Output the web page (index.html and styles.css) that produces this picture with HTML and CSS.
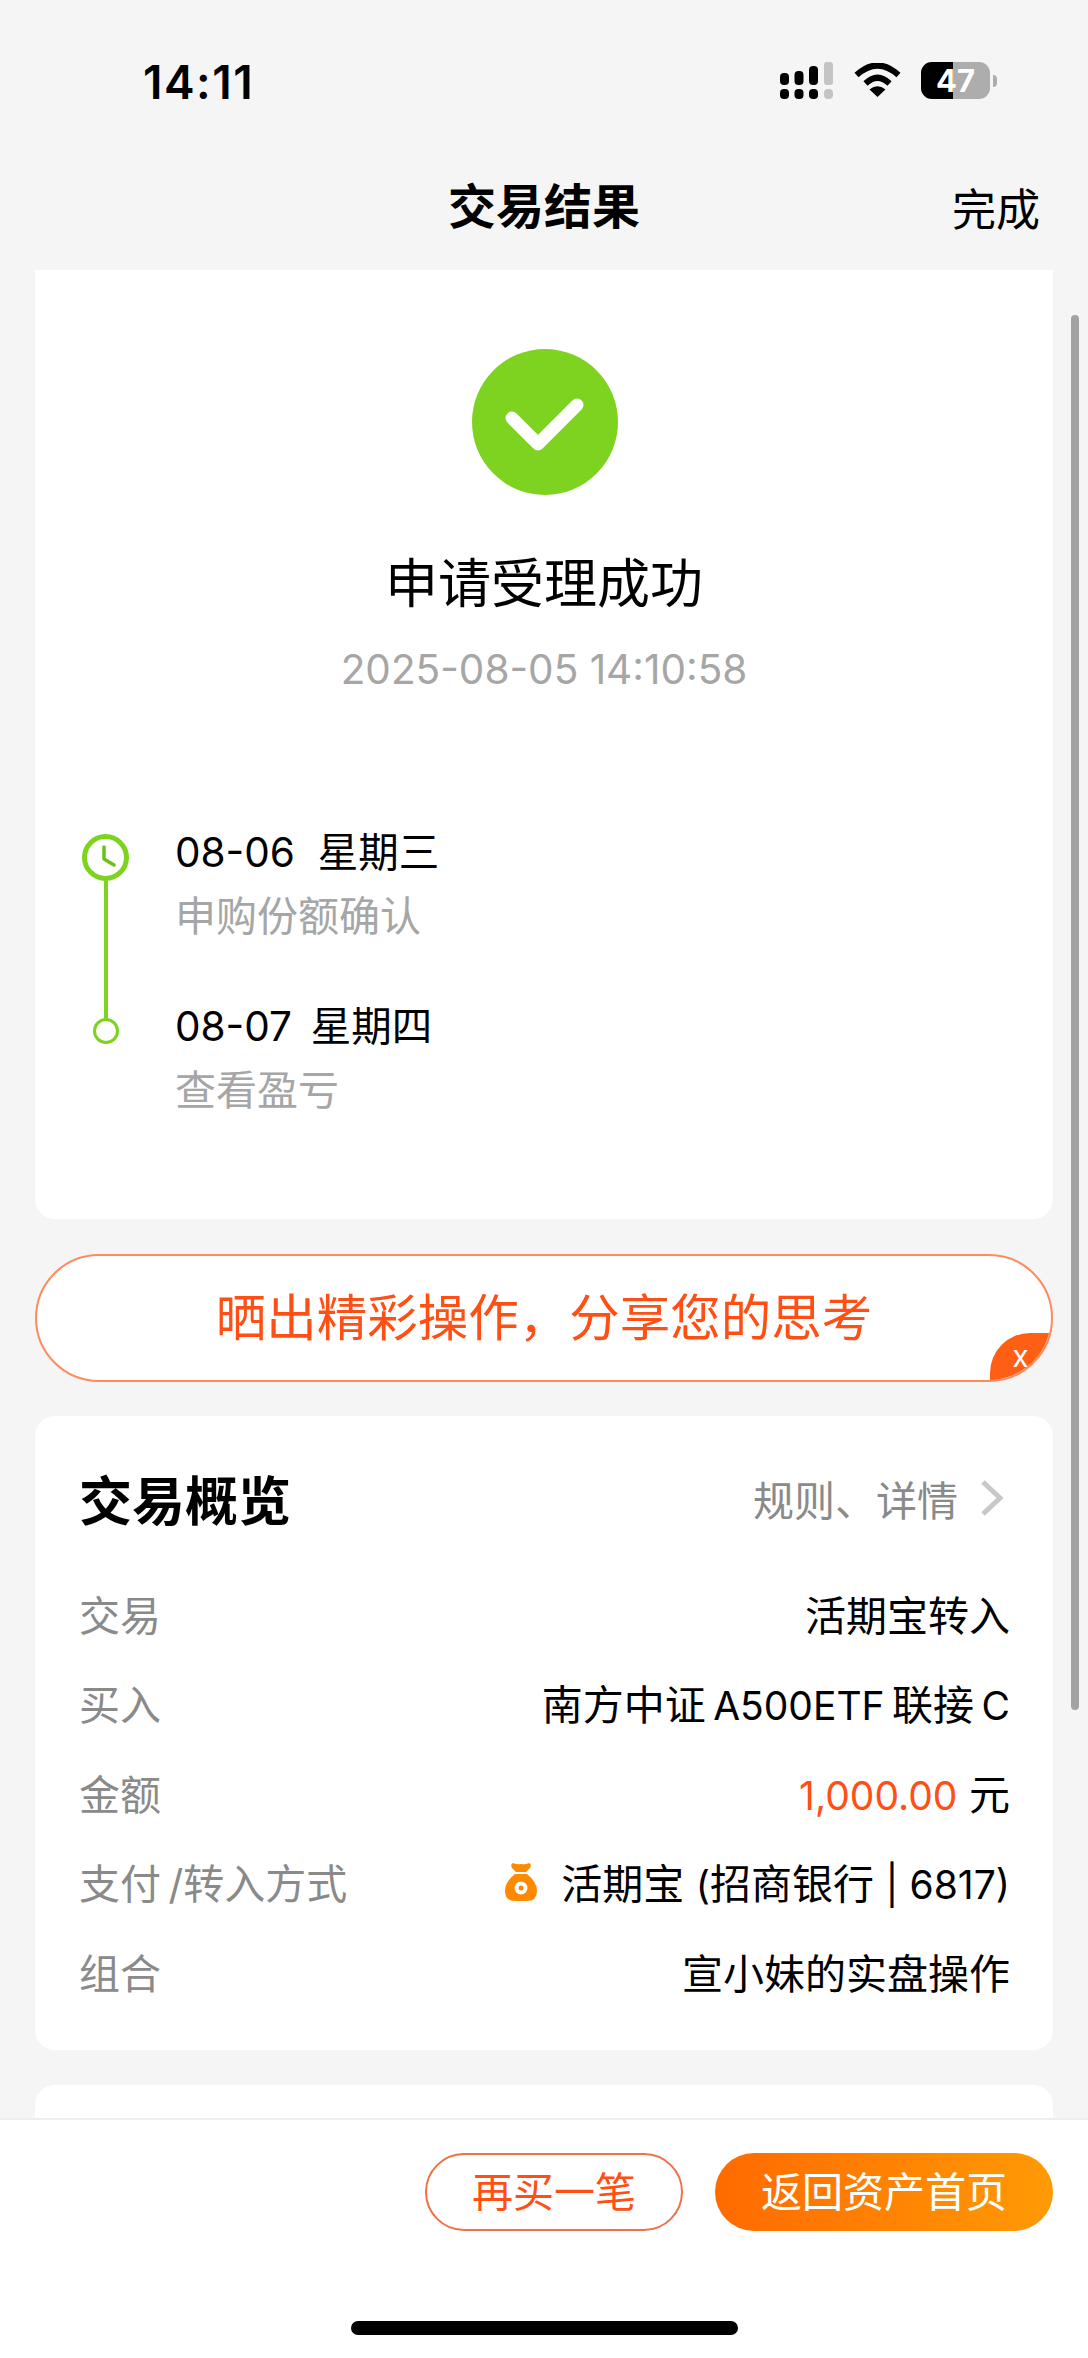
FILE: index.html
```html
<!DOCTYPE html>
<html lang="zh-CN">
<head>
  <meta charset="UTF-8">
  <meta name="viewport" content="width=device-width, initial-scale=1.0">
  <title>交易结果</title>
  <link rel="stylesheet" href="styles.css">
</head>
<body>
  <div class="app-container">
    <!-- Status Bar -->
    <div class="status-bar">
      <div class="status-time">14:11</div>
      <div class="status-icons">
        <svg class="icon-signal" width="53" height="37" viewBox="0 0 53 37">
          <rect x="0" y="11" width="9" height="12" rx="4" fill="#000"/>
          <rect x="14.500" y="9" width="9" height="14" rx="4" fill="#000"/>
          <rect x="29" y="4" width="9" height="19" rx="4" fill="#000"/>
          <rect x="44" y="0" width="9" height="23" rx="3" fill="#c4c4c4"/>
          <rect x="0" y="27" width="9" height="10" rx="4" fill="#000"/>
          <rect x="14.500" y="27" width="9" height="10" rx="4" fill="#000"/>
          <rect x="29" y="27" width="9" height="10" rx="4" fill="#000"/>
          <rect x="44" y="27" width="9" height="10" rx="4" fill="#c4c4c4"/>
        </svg>
        <svg class="icon-wifi" width="47" height="34" viewBox="0 0 47 34">
          <path d="M2.500 12 Q23.500 -7 44.500 12" fill="none" stroke="#000" stroke-width="6"/>
          <path d="M11.500 20.500 Q23.500 9 35.500 20.500" fill="none" stroke="#000" stroke-width="6"/>
          <path d="M15.500 26.500 Q23.500 20 31.500 26.500 L23.500 34 Z" fill="#000"/>
        </svg>
        <div class="battery">
          <div class="battery-body">
            <div class="battery-fill"></div>
            <div class="battery-text">47</div>
          </div>
          <div class="battery-cap"></div>
        </div>
      </div>
    </div>

    <!-- Nav -->
    <div class="nav-bar">
      <div class="nav-title">交易结果</div>
      <div class="nav-action">完成</div>
    </div>

    <!-- Content -->
    <div class="content">
      <div class="card result-card">
        <svg class="result-icon" width="146" height="146" viewBox="0 0 146 146">
          <circle cx="73" cy="73" r="73" fill="#7ed321"/>
          <path d="M40 69 L66 95 L105 56" fill="none" stroke="#fff" stroke-width="13" stroke-linecap="round" stroke-linejoin="round"/>
        </svg>
        <div class="result-title">申请受理成功</div>
        <div class="result-time">2025-08-05 14:10:58</div>

        <div class="timeline">
          <div class="timeline-rail">
            <svg width="47" height="47" viewBox="0 0 47 47">
              <circle cx="23.500" cy="23.500" r="21" fill="#fff" stroke="#7ed321" stroke-width="5"/>
              <path d="M22 13 V25 L32 31" fill="none" stroke="#6cbf1c" stroke-width="3.500" stroke-linecap="round" stroke-linejoin="round"/>
            </svg>
            <div class="rail-line"></div>
            <div class="rail-dot"></div>
          </div>
          <div class="timeline-list">
            <div class="timeline-item">
              <div class="timeline-date">08-06&nbsp; 星期三</div>
              <div class="timeline-desc">申购份额确认</div>
            </div>
            <div class="timeline-item">
              <div class="timeline-date">08-07&nbsp; 星期四</div>
              <div class="timeline-desc">查看盈亏</div>
            </div>
          </div>
        </div>
      </div>

      <div class="share-banner">
        晒出精彩操作，分享您的思考
        <div class="share-close">x</div>
      </div>

      <div class="card overview-card">
        <div class="overview-header">
          <div class="overview-title">交易概览</div>
          <div class="overview-link">
            规则、详情
            <svg width="24" height="38" viewBox="0 0 24 38">
              <path d="M3 3 L20 19 L3 35" fill="none" stroke="#c8c8c8" stroke-width="5"/>
            </svg>
          </div>
        </div>
        <div class="overview-row">
          <div class="row-label">交易</div>
          <div class="row-value">活期宝转入</div>
        </div>
        <div class="overview-row">
          <div class="row-label">买入</div>
          <div class="row-value">南方中证&#8201;<span class="latin">A500ETF</span>&#8201;联接&#8201;<span class="latin">C</span></div>
        </div>
        <div class="overview-row">
          <div class="row-label">金额</div>
          <div class="row-value"><span class="latin amount">1,000.00</span> 元</div>
        </div>
        <div class="overview-row">
          <div class="row-label">支付&#8201;/转入方式</div>
          <div class="row-value pay-method">
            <svg width="32" height="39" viewBox="0 0 32 39">
              <path d="M8 1 Q12 3 16 2 Q20 3 24 1 Q27 2 25 6 L21 10 H11 L7 6 Q5 2 8 1 Z" fill="#ff8a00"/>
              <path d="M10 12 H22 Q32 20 32 29 Q32 39 22 39 H10 Q0 39 0 29 Q0 20 10 12 Z" fill="#ff8a00"/>
              <circle cx="16" cy="26" r="6.500" fill="#fff"/>
              <circle cx="16" cy="26" r="2.500" fill="#ff8a00"/>
            </svg>
            <span>活期宝 <span class="latin">(</span>招商银行 <span class="latin">| 6817)</span></span>
          </div>
        </div>
        <div class="overview-row">
          <div class="row-label">组合</div>
          <div class="row-value">宣小妹的实盘操作</div>
        </div>
      </div>

      <div class="card next-card"></div>
    </div>

    <!-- Overlay scrollbar -->
    <div class="scroll-thumb"></div>

    <!-- Footer -->
    <div class="footer">
      <div class="footer-buttons">
        <div class="btn btn-outline">再买一笔</div>
        <div class="btn btn-primary">返回资产首页</div>
      </div>
      <div class="home-indicator"></div>
    </div>
  </div>
</body>
</html>
```

FILE: styles.css
```css
/* =====================
   Variables
   ===================== */
:root {
  --page-bg: #f5f5f5;
  --text: #000;
  --text-muted: #a6a6a6;
  --text-label: #8a8a8a;
  --green: #7ed321;
  --orange: #ff4f14;
}

/* =====================
   Global
   ===================== */
html, body {
  margin: 0;
  padding: 0;
  height: 100%;
}

body {
  font-family: Inter, "Noto Sans CJK SC", sans-serif;
  color: var(--text);
  background: var(--page-bg);
}

.app-container {
  position: relative;
  display: flex;
  flex-direction: column;
  height: 2358px;
  overflow: hidden;
}

/* =====================
   Status Bar
   ===================== */
.status-bar {
  height: 120px;
  flex-shrink: 0;
  display: flex;
  justify-content: space-between;
  padding: 62px 91px 0 143px;
  box-sizing: border-box;
}

.status-time {
  font-size: 46px;
  font-weight: 600;
  line-height: 40px;
  letter-spacing: 1.500px;
}

.status-icons {
  display: flex;
  align-items: flex-start;
  height: 37px;
}

.icon-wifi {
  margin: 1px 20px 0 21px;
}

.battery {
  display: flex;
  align-items: center;
}

.battery-body {
  position: relative;
  width: 69px;
  height: 37px;
  border-radius: 11px;
  background: #adadad;
  overflow: hidden;
}

.battery-fill {
  width: 32px;
  height: 100%;
  background: #000;
}

.battery-text {
  position: absolute;
  top: 0;
  left: 0;
  right: 0;
  text-align: center;
  color: #fff;
  font-size: 31px;
  font-weight: 700;
  line-height: 37px;
}

.battery-cap {
  width: 4px;
  height: 12px;
  margin-left: 3px;
  border-radius: 0 6px 6px 0;
  background: #adadad;
}

/* =====================
   Nav
   ===================== */
.nav-bar {
  position: relative;
  height: 150px;
  flex-shrink: 0;
  display: flex;
  justify-content: center;
  padding-top: 57px;
  box-sizing: border-box;
}

.nav-title {
  font-size: 48px;
  font-weight: 700;
  line-height: 60px;
}

.nav-action {
  position: absolute;
  top: 60px;
  right: 48px;
  font-size: 44px;
  line-height: 60px;
}

/* =====================
   Content
   ===================== */
.content {
  flex: 1;
  min-height: 0;
  overflow: hidden;
  padding: 0 35px;
}

.card {
  background: #fff;
  border-radius: 20px;
}

.scroll-thumb {
  position: absolute;
  left: 1071px;
  top: 315px;
  width: 8px;
  height: 1395px;
  border-radius: 4px;
  background: #a3a3a3;
}

/* =====================
   Result Card
   ===================== */
.result-card {
  display: flex;
  flex-direction: column;
  border-radius: 0 0 20px 20px;
  padding: 79px 0 104px;
}

.result-icon {
  display: block;
  align-self: center;
  margin-left: 2px;
}

.result-title {
  margin-top: 53px;
  font-size: 53px;
  line-height: 72px;
  text-align: center;
}

.result-time {
  margin-top: 25px;
  font-size: 40.500px;
  line-height: 50px;
  text-align: center;
  color: var(--text-muted);
}

.timeline {
  display: flex;
  margin-top: 133px;
  padding-left: 47px;
}

.timeline-rail {
  display: flex;
  flex-direction: column;
  align-items: center;
  width: 47px;
  margin-right: 46px;
  padding: 6px 0 71px;
}

.rail-line {
  flex: 1;
  width: 4px;
  background: var(--green);
}

.rail-dot {
  width: 26px;
  height: 26px;
  box-sizing: border-box;
  border: 3px solid var(--green);
  border-radius: 50%;
}

.timeline-item + .timeline-item {
  margin-top: 61px;
}

.timeline-item + .timeline-item .timeline-date {
  word-spacing: -2px;
}

.timeline-date {
  font-size: 40.500px;
  line-height: 50px;
}

.timeline-desc {
  margin-top: 13px;
  font-size: 41px;
  line-height: 50px;
  color: var(--text-muted);
}

/* =====================
   Share Banner
   ===================== */
.share-banner {
  position: relative;
  height: 128px;
  margin-top: 35px;
  box-sizing: border-box;
  border: 2px solid #ff8a5c;
  border-radius: 64px;
  background: #fff;
  overflow: hidden;
  font-size: 50.500px;
  line-height: 124px;
  text-align: center;
  color: var(--orange);
}

.share-close {
  position: absolute;
  right: 0;
  bottom: 0;
  width: 61px;
  height: 47px;
  border-top-left-radius: 40px;
  background: #ff5f14;
  color: #fff;
  font-size: 30px;
  line-height: 47px;
  text-align: center;
}

/* =====================
   Overview Card
   ===================== */
.overview-card {
  margin-top: 34px;
  padding: 50px 43px 34px 44px;
}

.overview-header {
  display: flex;
  justify-content: space-between;
  align-items: center;
  height: 64px;
  margin-bottom: 38px;
}

.overview-title {
  font-size: 53px;
  font-weight: 700;
}

.overview-link {
  display: flex;
  align-items: center;
  gap: 22px;
  margin-right: 6px;
  font-size: 41px;
  color: var(--text-label);
}

.overview-row {
  display: flex;
  justify-content: space-between;
  align-items: center;
  height: 89.500px;
  font-size: 41px;
}

.row-label {
  color: var(--text-label);
}

.latin {
  font-size: 39px;
}

.amount {
  color: var(--orange);
}

.pay-method {
  display: flex;
  align-items: center;
  gap: 24px;
}

.next-card {
  height: 60px;
  margin-top: 35px;
}

/* =====================
   Footer
   ===================== */
.footer {
  height: 240px;
  flex-shrink: 0;
  display: flex;
  flex-direction: column;
  box-sizing: border-box;
  border-top: 2px solid #eee;
  background: #fff;
}

.footer-buttons {
  display: flex;
  justify-content: flex-end;
  gap: 32px;
  padding: 33px 35px 0 0;
}

.btn {
  height: 78px;
  box-sizing: border-box;
  border-radius: 39px;
  font-size: 41px;
  line-height: 78px;
  text-align: center;
}

.btn-outline {
  width: 258px;
  border: 2px solid #f0704a;
  line-height: 74px;
  color: var(--orange);
}

.btn-primary {
  width: 338px;
  background: linear-gradient(90deg, #ff6a00, #ff9a05);
  color: #fff;
}

.home-indicator {
  align-self: center;
  width: 387px;
  height: 14px;
  margin-top: 90px;
  border-radius: 7px;
  background: #000;
}
```
